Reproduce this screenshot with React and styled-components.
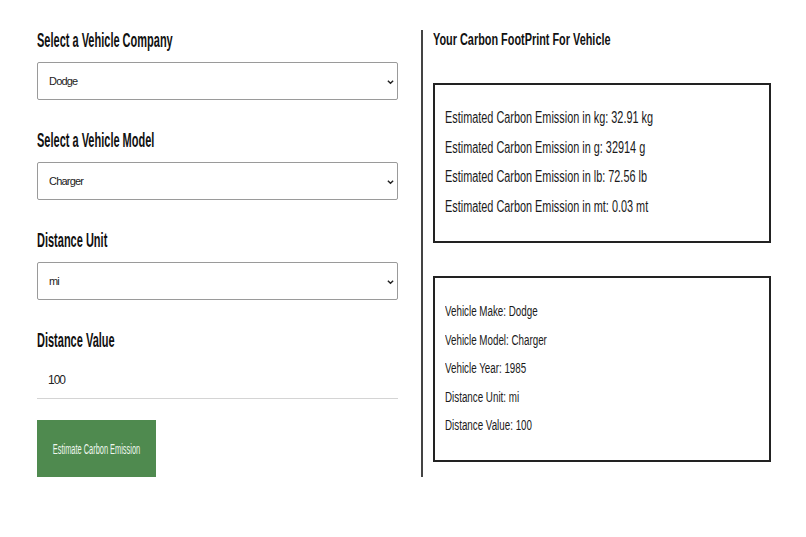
import React, { useState } from "react";
import styled, { createGlobalStyle } from "styled-components";

const GlobalStyle = createGlobalStyle`
  body {
    margin: 0;
    background: #fff;
    font-family: "Liberation Sans", Arial, sans-serif;
    color: #111;
  }
`;

const sans = `"Liberation Sans", Arial, sans-serif`;

// the original uses a condensed face, squeeze the text horizontally
const Squeeze = styled.span`
  display: inline-block;
  white-space: nowrap;
  transform: scaleX(${(p) => p.$x});
  transform-origin: ${(p) => (p.$center ? "center" : "left")} center;
`;

function Dropdown({ value, onChange, options }) {
  return (
    <SelectWrap>
      <Select value={value} onChange={onChange}>
        {options.map((o) => (
          <option key={o}>{o}</option>
        ))}
      </Select>
      <Chevron viewBox="0 0 8 6" aria-hidden="true">
        <path d="M1 1.5 L4 4.5 L7 1.5" />
      </Chevron>
    </SelectWrap>
  );
}

export default function App() {
  const [make, setmake] = useState("Dodge");
  const [model, setmodel] = useState("Charger");
  const [unit, setunit] = useState("mi");
  const [distance, setdistance] = useState("100");

  const results = [
    "Estimated Carbon Emission in kg: 32.91 kg",
    "Estimated Carbon Emission in g: 32914 g",
    "Estimated Carbon Emission in lb: 72.56 lb",
    "Estimated Carbon Emission in mt: 0.03 mt",
  ];
  const details = [
    `Vehicle Make: ${make}`,
    `Vehicle Model: ${model}`,
    "Vehicle Year: 1985",
    `Distance Unit: ${unit}`,
    `Distance Value: ${distance}`,
  ];

  return (
    <Wrapper>
      <GlobalStyle />
      <FormCol>
        <Group>
          <Label>
            <Squeeze $x={0.55}>Select a Vehicle Company</Squeeze>
          </Label>
          <Dropdown
            value={make}
            onChange={(e) => setmake(e.target.value)}
            options={["Dodge", "Ford", "Toyota"]}
          />
        </Group>
        <Group>
          <Label>
            <Squeeze $x={0.55}>Select a Vehicle Model</Squeeze>
          </Label>
          <Dropdown
            value={model}
            onChange={(e) => setmodel(e.target.value)}
            options={["Charger", "Challenger"]}
          />
        </Group>
        <Group>
          <Label>
            <Squeeze $x={0.55}>Distance Unit</Squeeze>
          </Label>
          <Dropdown
            value={unit}
            onChange={(e) => setunit(e.target.value)}
            options={["mi", "km"]}
          />
        </Group>
        <Group>
          <Label>
            <Squeeze $x={0.55}>Distance Value</Squeeze>
          </Label>
          <Input
            value={distance}
            onChange={(e) => setdistance(e.target.value)}
          />
        </Group>
        <Button type="button">
          <Squeeze $x={0.53} $center>
            Estimate Carbon Emission
          </Squeeze>
        </Button>
      </FormCol>

      <ResultCol>
        <Title>
          <Squeeze $x={0.68}>Your Carbon FootPrint For Vehicle</Squeeze>
        </Title>
        <Box>
          {results.map((r) => (
            <Line key={r} big>
              <Squeeze $x={0.68}>{r}</Squeeze>
            </Line>
          ))}
        </Box>
        <Box second>
          {details.map((d) => (
            <Line key={d}>
              <Squeeze $x={0.7}>{d}</Squeeze>
            </Line>
          ))}
        </Box>
      </ResultCol>
    </Wrapper>
  );
}

const Wrapper = styled.div`
  display: flex;
  align-items: stretch;
  margin-top: 30px;
  padding-left: 37px;
`;

const FormCol = styled.div`
  display: flex;
  flex-direction: column;
  width: 361px;
  margin-right: 23px;
`;

const Group = styled.div`
  display: flex;
  flex-direction: column;
  & + & {
    margin-top: 30px;
  }
`;

const Label = styled.label`
  font-family: ${sans};
  font-weight: 700;
  font-size: 20px;
  line-height: 20px;
  color: #111;
  margin-bottom: 12px;
`;

const SelectWrap = styled.div`
  position: relative;
  width: 100%;
`;

const Select = styled.select`
  appearance: none;
  -webkit-appearance: none;
  display: block;
  height: 38px;
  width: 100%;
  box-sizing: border-box;
  border: 1px solid #9a9a9a;
  border-radius: 2px;
  background: #fff;
  padding: 0 20px 0 11px;
  font-family: ${sans};
  font-size: 11px;
  letter-spacing: -0.8px;
  color: #222;
  outline: none;
`;

const Chevron = styled.svg`
  position: absolute;
  right: 4px;
  top: 17px;
  width: 7px;
  height: 6px;
  fill: none;
  stroke: #222;
  stroke-width: 1.6;
  pointer-events: none;
`;

const Input = styled.input`
  height: 37px;
  width: 100%;
  box-sizing: border-box;
  border: none;
  border-bottom: 1px solid #d4d4d4;
  padding: 0 11px;
  font-family: ${sans};
  font-size: 12px;
  letter-spacing: -1px;
  color: #222;
  outline: none;
`;

const Button = styled.button`
  margin-top: 21px;
  width: 119px;
  height: 57px;
  padding: 0;
  border: none;
  background: #4f8a4f;
  color: #eef7ee;
  font-family: ${sans};
  font-size: 14px;
  cursor: pointer;
  display: flex;
  align-items: center;
  justify-content: center;
`;

const ResultCol = styled.div`
  display: flex;
  flex-direction: column;
  border-left: 2px solid #444;
  padding-left: 10px;
  width: 338px;
`;

const Title = styled.h2`
  margin: 0 0 33px;
  font-family: ${sans};
  font-weight: 700;
  font-size: 16px;
  line-height: 20px;
  color: #111;
`;

const Box = styled.div`
  border: 2px solid #222;
  padding: ${(p) => (p.second ? "19px 10px 20px" : "18px 10px 20px")};
  margin-top: ${(p) => (p.second ? "33px" : "0")};
  display: flex;
  flex-direction: column;
`;

const Line = styled.p`
  margin: 0;
  font-family: ${sans};
  font-size: ${(p) => (p.big ? "16px" : "14px")};
  line-height: ${(p) => (p.big ? "29.5px" : "28.6px")};
  color: #1a1a1a;
`;
